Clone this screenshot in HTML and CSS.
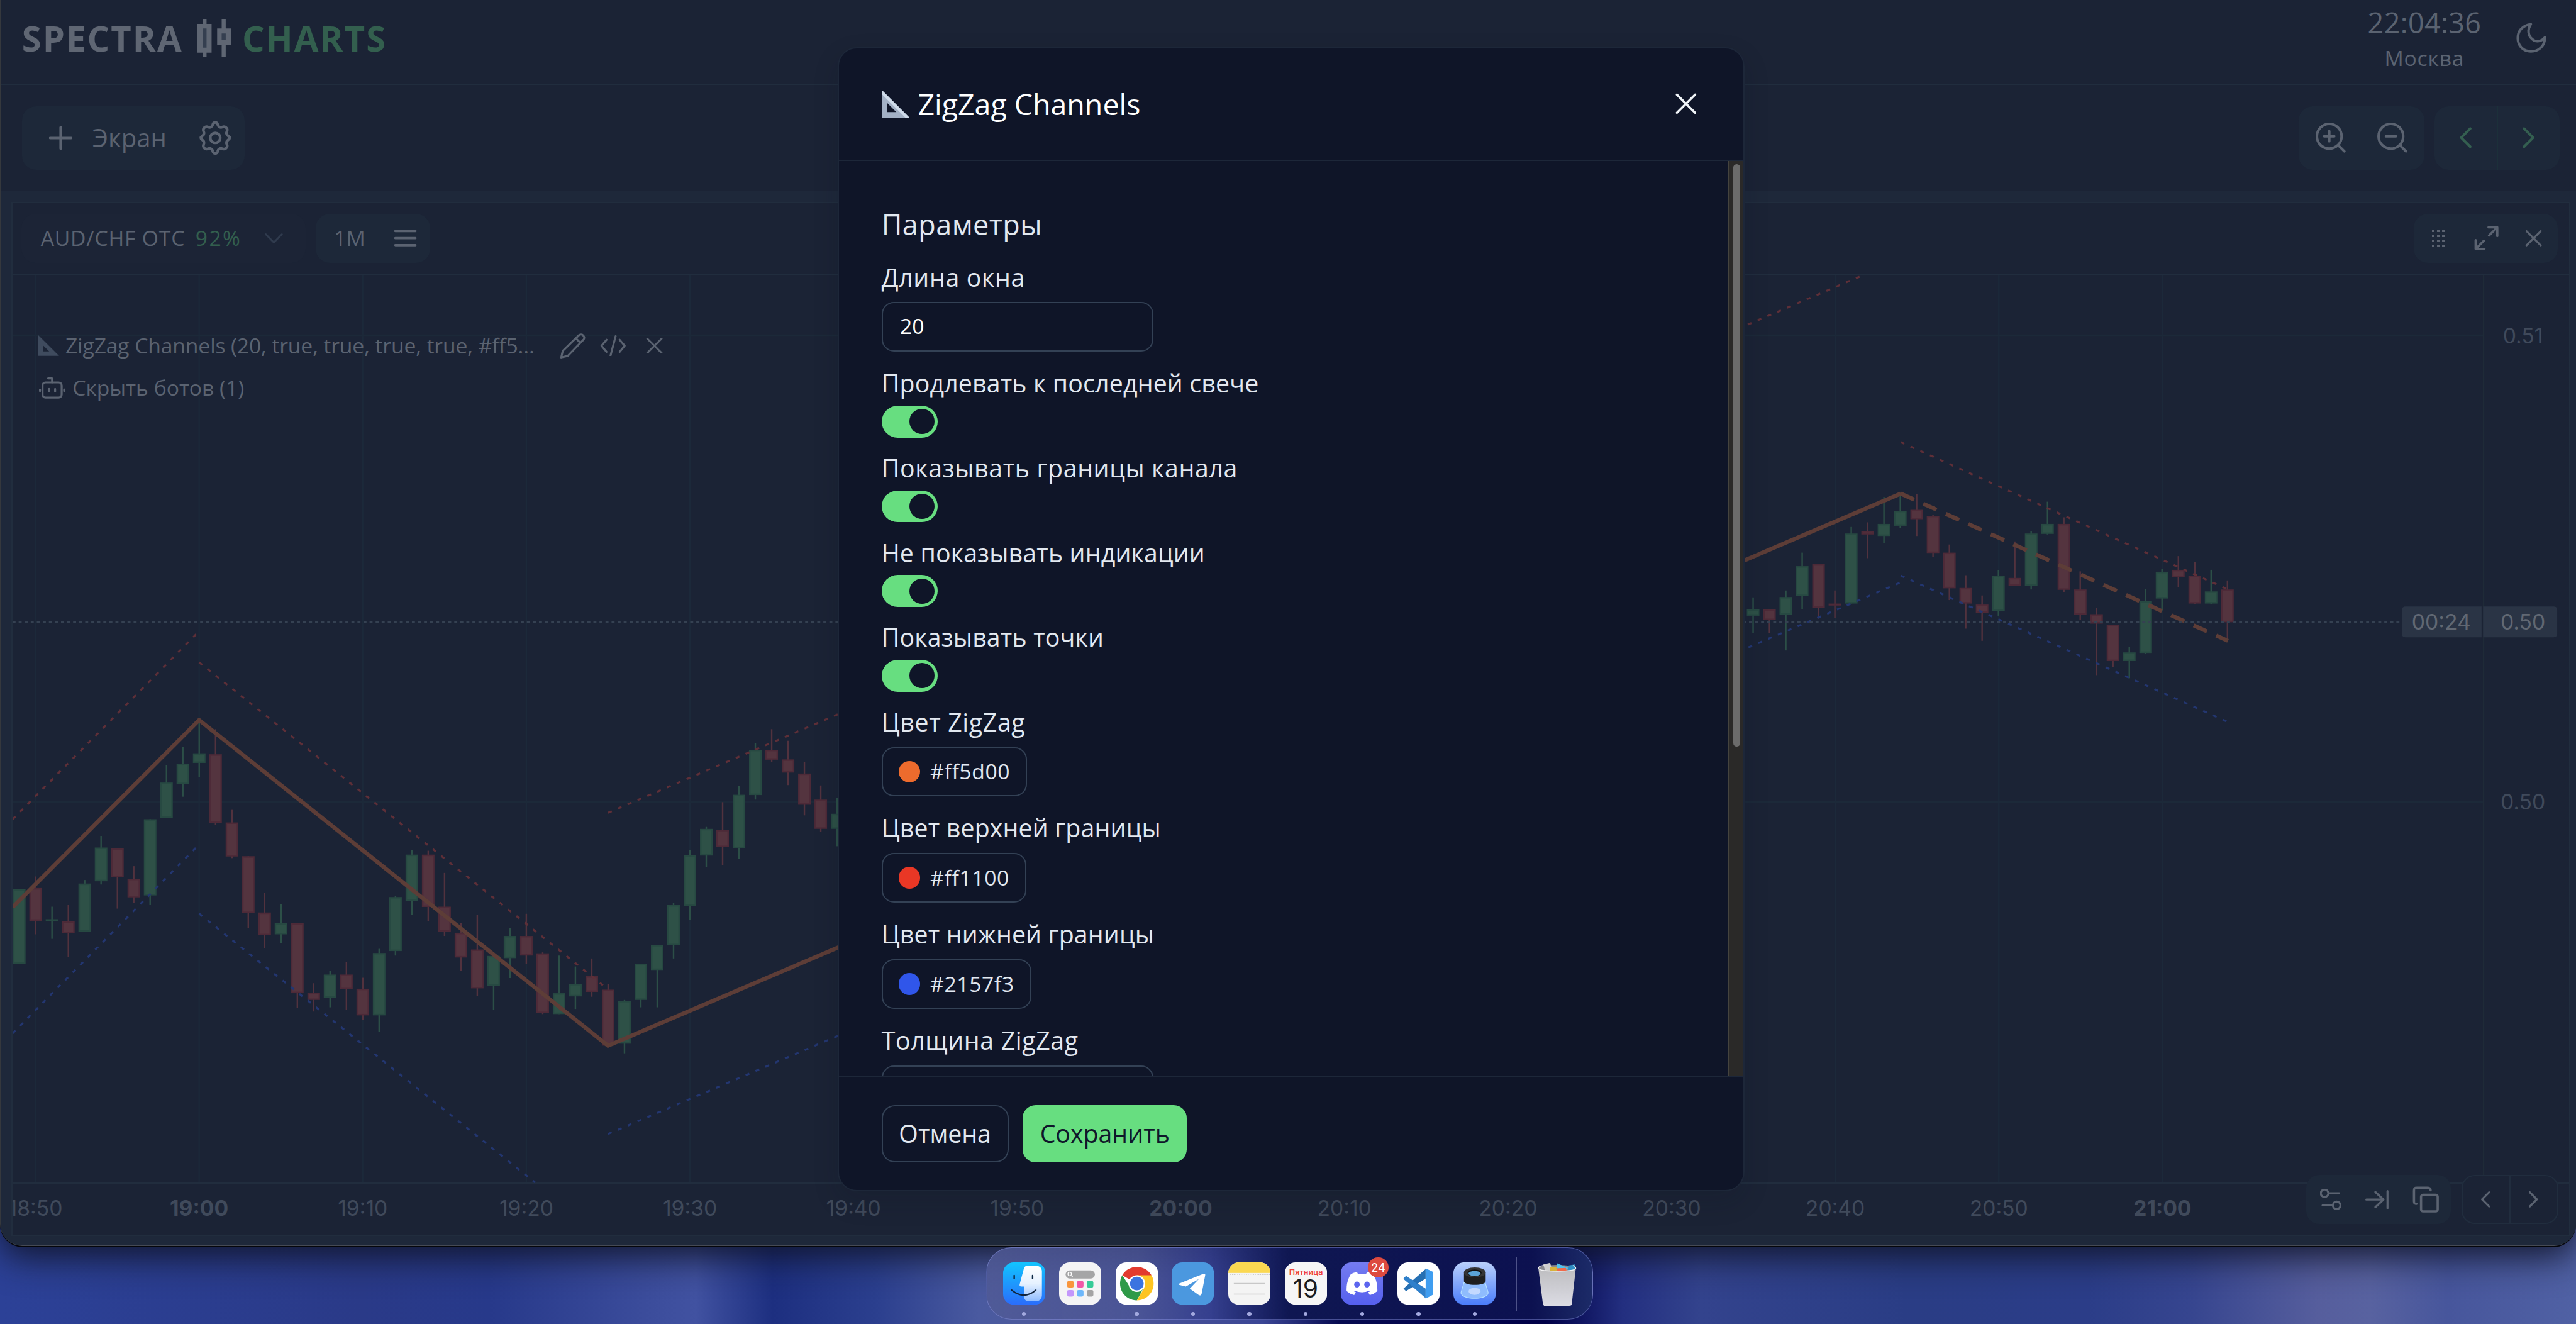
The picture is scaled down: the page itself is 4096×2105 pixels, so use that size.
FILE: index.html
```html
<!DOCTYPE html>
<html lang="ru">
<head>
<meta charset="utf-8">
<title>Spectra Charts</title>
<link rel="stylesheet" href="styles.css">
</head>
<body>
<div class="desktop">
  <div class="window">
    <header class="topbar">
      <div class="logo">
        <span class="logo-main">SPECTRA</span>
        <svg class="logo-icon" viewBox="0 0 68 76"><path d="M10 0h8v10h10v57H18v9h-8v-9H0V10h10zM48 0h8v19h11v33H56v24h-8V52H39V19h9z" fill="#5f6673"/><path d="M10 19h8v38h-8zM48 29h8v13h-8z" fill="#353f50"/></svg>
        <span class="logo-accent">CHARTS</span>
      </div>
      <div class="topbar-right">
        <div class="clock"><span class="clock-time">22:04:36</span><span class="clock-city">Москва</span></div>
        <svg class="icon moon" viewBox="0 0 60 60"><path d="M29 3C13 5 3 16 3 31c0 15 11 26 26 26 16 0 28-11 28-28-7 9-18 10-25 4-9-7-10-20-3-30z" stroke-width="5"/></svg>
      </div>
    </header>

    <div class="toolbar">
      <div class="group screen-group">
        <svg class="icon plus" viewBox="0 0 46 46"><path d="M23 2v42M2 23h42" stroke-width="5"/></svg>
        <span class="screen-label">Экран</span>
        <svg class="icon gear" viewBox="0 0 24 24"><path stroke-width="1.9" d="M10.3 2.6c.4-1.9 3-1.9 3.4 0 .3 1.6 1.8 2.4 3.3 1.8 1.900-.8 4 1 3.200 2.900-.6 1.300-.3 2.500.8 3.300 1.500 1 1.500 1.800 0 2.800-1.100.8-1.400 2-.8 3.300.8 1.900-1.300 3.700-3.200 2.900-1.500-.6-3 .2-3.300 1.800-.4 1.900-3 1.900-3.400 0-.3-1.600-1.800-2.400-3.300-1.800-1.900.8-4-1-3.200-2.900.6-1.300.3-2.500-.8-3.300-1.500-1-1.500-1.800 0-2.800 1.100-.8 1.400-2 .8-3.300-.8-1.900 1.300-3.700 3.200-2.900 1.500.6 3-.2 3.300-1.800z"/><circle cx="12" cy="12" r="3.500" stroke-width="1.900"/></svg>
      </div>
      <div class="toolbar-right">
        <div class="group zoom-group">
          <svg class="icon zoom" viewBox="0 0 60 60"><circle cx="27" cy="27" r="24.500" stroke-width="5"/><path d="M45 45l12 12M27 17v20M17 27h20" stroke-width="5"/></svg>
          <svg class="icon zoom" viewBox="0 0 60 60"><circle cx="27" cy="27" r="24.500" stroke-width="5"/><path d="M45 45l12 12M17 27h20" stroke-width="5"/></svg>
        </div>
        <div class="group nav-group">
          <span class="nav-cell"><svg class="icon chev green" viewBox="0 0 24 42"><path d="M21 3L3 21l18 18" stroke-width="5"/></svg></span>
          <span class="nav-cell"><svg class="icon chev green" viewBox="0 0 24 42"><path d="M3 3l18 18L3 39" stroke-width="5"/></svg></span>
        </div>
      </div>
    </div>

    <main class="workspace">
      <section class="panel">
        <div class="panel-head">
          <div class="panel-left">
            <div class="group pair"><span class="pair-name">AUD/CHF OTC</span><span class="pair-pct">92%</span><svg class="icon pair-chev" viewBox="0 0 36 20"><path d="M2 2l16 16L34 2" stroke-width="3.500"/></svg></div>
            <div class="group frame"><span class="frame-name">1M</span><svg class="icon burger" viewBox="0 0 44 34"><path d="M2 3h40M2 17h40M2 31h40" stroke-width="4.500"/></svg></div>
          </div>
          <div class="group panel-tools">
            <svg class="icon grip" viewBox="0 0 25 35"><path d="M0 2.500h25M0 12.500h25M0 22.500h25M0 32.500h25" stroke-width="5" stroke-dasharray="5" stroke-linecap="butt"/></svg>
            <svg class="icon expand" viewBox="0 0 48 48"><path d="M28 3h17v17M44 4L29 19M20 45H3V28M4 44l15-15" stroke-width="4.500"/></svg>
            <svg class="icon cross-sm" viewBox="0 0 34 34"><path d="M2 2l30 30M32 2L2 32" stroke-width="4"/></svg>
          </div>
        </div>
        <div class="chart">
          <svg class="plot" id="plot" viewBox="26 546 5071 1902"></svg>
          <div class="legend">
            <div class="legend-row">
              <svg class="tri" viewBox="0 0 42 42"><path d="M0 0l42 42H0z" fill="#3f4b5e"/><path d="M9 20l13 13H9z" fill="#1b2335"/></svg>
              <span class="legend-name">ZigZag Channels (20, true, true, true, true, #ff5...</span>
              <svg class="icon pencil" viewBox="0 0 52 52"><path d="M3 49l3-13L38 5c6-5 14 3 9 9L16 46zM32 11l9 9" stroke-width="4"/></svg>
              <svg class="icon code" viewBox="0 0 52 42"><path d="M13 9L3 21l10 12M39 9l10 12-10 12M31 2L21 40" stroke-width="4"/></svg>
              <svg class="icon cross-sm" viewBox="0 0 34 34"><path d="M2 2l30 30M32 2L2 32" stroke-width="4"/></svg>
            </div>
            <div class="legend-row">
              <svg class="icon bot" viewBox="0 0 52 42"><rect x="7" y="10" width="38" height="30" rx="6" stroke-width="4"/><path d="M26 10V2h-8M2 24v3M50 24v3M20 23v5M32 23v5" stroke-width="4"/></svg>
              <span class="bots-label">Скрыть ботов (1)</span>
            </div>
          </div>
          <div class="chart-tools">
            <div class="group tools-group">
              <svg class="icon sliders" viewBox="0 0 42 42"><circle cx="9" cy="9" r="7.500" stroke-width="4"/><circle cx="33" cy="33" r="7.500" stroke-width="4"/><path d="M18 9h20M5 33h19" stroke-width="4"/></svg>
              <svg class="icon tobar" viewBox="0 0 46 38"><path d="M2 19h34M20 4l16 15-16 15M44 2v34" stroke-width="4"/></svg>
              <svg class="icon copy" viewBox="0 0 52 52"><rect x="17" y="17" width="33" height="33" rx="4" stroke-width="4.500"/><path d="M8 35c-4 0-5-1-5-5V9c0-5 1-6 6-6h20c5 0 7 1 7 5" stroke-width="4.500"/></svg>
            </div>
            <div class="pager">
              <span class="pager-cell"><svg class="icon pager-chev" viewBox="0 0 18 32"><path d="M16 2L2 16l14 14" stroke-width="4"/></svg></span>
              <span class="pager-cell"><svg class="icon pager-chev" viewBox="0 0 18 32"><path d="M2 2l14 14L2 30" stroke-width="4"/></svg></span>
            </div>
          </div>
        </div>
      </section>
    </main>

    <div class="modal">
      <div class="modal-head">
        <svg class="modal-tri" viewBox="0 0 55 55"><path d="M0 0l55 55H0z" fill="#a3b1c6"/><path d="M0 0l55 55h-8L0 8z" fill="#cfdbea"/><path d="M10 25l19 19H10z" fill="#0f1528"/></svg>
        <h1 class="modal-title">ZigZag Channels</h1>
        <svg class="modal-close" viewBox="0 0 42 42"><path d="M3 3l36 36M39 3L3 39"/></svg>
      </div>
      <div class="modal-mid">
        <div class="modal-body">
          <h2 class="section">Параметры</h2>
          <div class="field"><label class="wide">Длина окна</label><div class="input">20</div></div>
          <div class="field sw"><label>Продлевать к последней свече</label><span class="toggle"></span></div>
          <div class="field sw"><label class="wide">Показывать границы канала</label><span class="toggle"></span></div>
          <div class="field sw"><label>Не показывать индикации</label><span class="toggle"></span></div>
          <div class="field sw"><label>Показывать точки</label><span class="toggle"></span></div>
          <div class="field"><label class="wide">Цвет ZigZag</label><div class="color"><i class="dot orange"></i>#ff5d00</div></div>
          <div class="field"><label>Цвет верхней границы</label><div class="color"><i class="dot red"></i>#ff1100</div></div>
          <div class="field"><label>Цвет нижней границы</label><div class="color"><i class="dot blue"></i>#2157f3</div></div>
          <div class="field"><label class="wide">Толщина ZigZag</label><div class="input"></div></div>
        </div>
        <div class="scroll"><div class="thumb"></div></div>
      </div>
      <div class="modal-foot">
        <div class="btn">Отмена</div>
        <div class="btn primary">Сохранить</div>
      </div>
    </div>
  </div>

  <div class="dock-area">
    <div class="dock">
      <div class="app on">
        <svg viewBox="0 0 84 84"><defs><linearGradient id="fa" x2="0" y2="1"><stop stop-color="#12c4ff"/><stop offset="1" stop-color="#2a6dfb"/></linearGradient><linearGradient id="fb" x2="0" y2="1"><stop stop-color="#fff"/><stop offset=".5" stop-color="#e6f2ff"/><stop offset="1" stop-color="#8fbcff"/></linearGradient></defs><rect width="84" height="84" rx="21" fill="url(#fa)"/><path d="M48 7h18c7 0 11 5 11 11v47c0 7-4 12-11 12H51c-6 0-9-3-9-8V48h-5c-4 0-5-1-4-5l8-30c1-4 3-6 7-6z" fill="url(#fb)"/><path d="M22 26v6M58.500 26v6" stroke="#0e2a45" stroke-width="3" stroke-linecap="round"/><path d="M17 55q24 20 48 0" fill="none" stroke="#10233c" stroke-width="2.800" stroke-linecap="round"/></svg>
      </div>
      <div class="app">
        <svg viewBox="0 0 84 84"><rect width="84" height="84" rx="21" fill="#f4f4f5"/><rect x="13" y="16" width="58" height="16" rx="8" fill="#a5a5a6"/><circle cx="21" cy="23" r="3.500" fill="none" stroke="#fff" stroke-width="1.500"/><path d="M24 26l3 3" stroke="#fff" stroke-width="1.500"/><rect x="16" y="37" width="13" height="13" rx="3" fill="#f9963c"/><rect x="35.500" y="37" width="13" height="13" rx="3" fill="#f258a7"/><rect x="55" y="37" width="13" height="13" rx="3" fill="#38cb98"/><rect x="16" y="55" width="13" height="13" rx="3" fill="#c497fb"/><rect x="35.500" y="55" width="13" height="13" rx="3" fill="#6eb8fb"/><rect x="55" y="55" width="13" height="13" rx="3" fill="#a4a4a4"/></svg>
      </div>
      <div class="app on">
        <svg viewBox="0 0 84 84"><rect width="84" height="84" rx="21" fill="#fff"/><path d="M42 42L13 25.500A33.500 33.500 0 0 1 71 25.500z" fill="#e23a2e"/><path d="M42 42L29 50 13 25.500A33.500 33.500 0 0 0 42 75.500l14-26z" fill="#2f9a48"/><path d="M42 25.500h29A33.500 33.500 0 0 1 42 75.500l15-25z" fill="#fdc422"/><circle cx="42" cy="42" r="16.500" fill="#fff"/><circle cx="42" cy="42" r="13.500" fill="#3b74e0"/></svg>
      </div>
      <div class="app on">
        <svg viewBox="0 0 84 84"><rect width="84" height="84" rx="21" fill="#4b98df"/><path d="M15 42l47-19c4-1.500 5 0 4.500 3l-7 36c-1 4-4 4.500-7 2L36 52l18-19-26 15-12-3c-3-1-3-2-1-3z" fill="#fff"/></svg>
      </div>
      <div class="app on">
        <svg viewBox="0 0 84 84"><defs><clipPath id="nc"><rect width="84" height="84" rx="21"/></clipPath></defs><g clip-path="url(#nc)"><rect width="84" height="84" fill="#f4f4f4"/><rect width="84" height="21" fill="#fbd851"/><path d="M4 24h80" stroke="#b9b9b9" stroke-width="1.500" stroke-dasharray="1.500 2"/><path d="M11 42h62M11 63h62" stroke="#c8c8c8" stroke-width="2"/></g></svg>
      </div>
      <div class="app on">
        <svg viewBox="0 0 84 84"><rect width="84" height="84" rx="21" fill="#f6f6f6"/><text x="42" y="25" class="cal-day" textLength="67" lengthAdjust="spacingAndGlyphs">Пятница</text><text x="41" y="70" class="cal-num" textLength="50" lengthAdjust="spacingAndGlyphs">19</text></svg>
      </div>
      <div class="app on">
        <svg viewBox="0 0 84 84"><defs><linearGradient id="dc" x2="0" y2="1"><stop stop-color="#757cf0"/><stop offset="1" stop-color="#5660ee"/></linearGradient></defs><rect width="84" height="84" rx="21" fill="url(#dc)"/><path d="M20 23q6-3 12-4l2 4q8-1 16 0l2-4q7 1 12 4 9 14 8.500 34-7 6-15 8l-4-7q-11 4-23 0l-4 7q-8-2-15-8-1-19 8.500-34z" fill="#fff"/><path d="M27 57q15 7 30 0" fill="none" stroke="#5c65ee" stroke-width="2"/><ellipse cx="32" cy="44" rx="5.500" ry="6" fill="#5c65ee"/><ellipse cx="52" cy="44" rx="5.500" ry="6" fill="#5c65ee"/></svg>
        <span class="badge">24</span>
      </div>
      <div class="app on">
        <svg viewBox="0 0 84 84"><rect width="84" height="84" rx="21" fill="#fff"/><path d="M17 27l-5 5 44 39V52z" fill="#2f7fca"/><path d="M17 57l-5-5 44-39v19z" fill="#256fb3"/><path d="M17 27l-5 6 43 36V54z" fill="#2f80cb"/><path d="M56 12l15 7v45l-15 8z" fill="#3f9df0"/></svg>
      </div>
      <div class="app on">
        <svg viewBox="0 0 84 84"><defs><linearGradient id="pv" x2="0" y2="1"><stop stop-color="#b9d0fb"/><stop offset="1" stop-color="#4a7dfa"/></linearGradient></defs><rect width="84" height="84" rx="21" fill="url(#pv)"/><path d="M21 40L15 60c0 15 54 15 54 0l-6-20z" fill="#8fbcfd" stroke="#b5e0ff" stroke-width="1.500"/><ellipse cx="42" cy="57.500" rx="12" ry="7" fill="#c3d9ff"/><path d="M21 20v17c0 10 43 10 43 0V20z" fill="#1f1f20"/><ellipse cx="42.500" cy="20" rx="21.500" ry="10" fill="#343435"/><ellipse cx="42" cy="21" rx="14" ry="7" fill="#111"/><ellipse cx="42" cy="22" rx="12" ry="5" fill="#5aa4d8"/></svg>
      </div>
      <div class="dock-sep"></div>
      <div class="app trash">
        <svg viewBox="0 0 84 90"><defs><linearGradient id="tr" x2="0" y2="1"><stop stop-color="#bdbdc0"/><stop offset="1" stop-color="#dcdce4"/></linearGradient></defs><ellipse cx="42" cy="12" rx="38" ry="7" fill="#8a8a8e"/><path d="M14 4l14-3 4 16-14 1z" fill="#cfcfcf"/><path d="M28 10l14-1v9H28z" fill="#d6b23c"/><path d="M42 2l22 9-4 8-18 1z" fill="#4fc3f0"/><path d="M40 12l20-1 2 8-18 1z" fill="#f06a4a"/><path d="M66 6l12-2v11l-14 3z" fill="#2f8fc4"/><path d="M4 12c2 8 74 8 76 0l-8 71c0 4-2 5-5 5H18c-4 0-5-2-5-5z" fill="url(#tr)"/><path d="M4 12c0-4 8-6 12-6M4 12c2 8 74 8 76 0 0-3-3-5-6-6" fill="none" stroke="#f2f2f4" stroke-width="1.600"/></svg>
      </div>
    </div>
  </div>
</div>
<script src="chart.js"></script>
</body>
</html>
```
FILE: styles.css
```css
/* 1rem = 100 design pixels on a 5110px wide canvas */
html { font-size: calc(100vw / 51.1); }
* { box-sizing: border-box; }
body {
  margin: 0;
  font-family: "Open Sans", "Noto Sans", sans-serif;
  font-size: .42rem;
  line-height: 1;
  color: #5b6371;
}
svg { display: block; flex: none; }
h1, h2 { margin: 0; font-weight: 400; }
span, label { white-space: pre; }

.desktop {
  height: 100vh;
  overflow: hidden;
  display: flex;
  flex-direction: column;
  background: linear-gradient(90deg, #2c4197 0, #2a3a88 14%, #27398a 19%, #3b4c9b 25%, #4152a1 27%, #1d2f80 30%, #2b3f8e 34%, #4a5aa0 38%, #505a98 42%, #3b4695 49%, #060a50 52%, #000047 60%, #232f80 63%, #33438d 66%, #2a3d85 74%, #2b3d88 81%, #36458f 85%, #565e9d 90%, #5862a0 92%, #47569c 95%, #5061a4 100%);
}

/* app window */
.window {
  position: relative;
  height: 24.71rem;
  flex: none;
  display: flex;
  flex-direction: column;
  background: #1b2335;
  border-left: .02rem solid #35383d;
  border-bottom: .02rem solid #454a54;
  border-radius: 0 0 .44rem .44rem;
  box-shadow: 0 .02rem 0 #05060a, 0 .2rem .7rem rgba(16, 20, 40, .95);
}
.icon { fill: none; stroke: #5b6371; stroke-linecap: round; stroke-linejoin: round; }
.icon.green { stroke: #345f50; }
.group { display: flex; align-items: center; background: #1d2839; border-radius: .28rem; }

.topbar {
  height: 1.69rem;
  flex: none;
  display: flex;
  justify-content: space-between;
  border-bottom: .03rem solid #212d3e;
  padding: 0 .58rem 0 .42rem;
}
.logo { display: flex; align-items: center; height: 1.5rem; font-size: .7rem; font-weight: 700; }
.logo-main { width: 3.48rem; letter-spacing: .026rem; color: #5f6673; }
.logo-icon { width: .68rem; height: .76rem; }
.logo-accent { margin-left: .21rem; letter-spacing: .026rem; color: #335f4e; }
.topbar-right { display: flex; align-items: center; height: 1.54rem; gap: .7rem; }
.clock { display: flex; flex-direction: column; align-items: center; gap: .21rem; }
.clock-time { font-size: .56rem; letter-spacing: .005rem; }
.clock-city { font-size: .42rem; letter-spacing: .01rem; }
.moon { width: .6rem; height: .6rem; margin-bottom: .03rem; }

.toolbar {
  height: 2.09rem;
  flex: none;
  display: flex;
  justify-content: space-between;
  align-items: center;
  padding: 0 .32rem 0 .42rem;
}
.screen-group { height: 1.26rem; width: 4.42rem; padding-left: .54rem; }
.plus { width: .46rem; height: .46rem; }
.screen-label { font-size: .5rem; margin-left: .4rem; width: 2.1rem; }
.gear { width: .68rem; height: .68rem; }
.toolbar-right { display: flex; gap: .2rem; }
.zoom-group { width: 2.49rem; height: 1.26rem; justify-content: center; gap: .62rem; }
.zoom { width: .6rem; height: .6rem; }
.nav-group { width: 2.49rem; height: 1.26rem; }
.nav-cell { flex: 1; height: 100%; display: flex; align-items: center; justify-content: center; }
.nav-cell + .nav-cell { border-left: .03rem solid #1c303a; }
.chev { width: .24rem; height: .42rem; }

.workspace {
  flex: 1;
  min-height: 0;
  display: flex;
  padding: .22rem .11rem .18rem .21rem;
  background: #1e283a;
  border-radius: 0 0 .42rem .42rem;
}
.panel { flex: 1; display: flex; flex-direction: column; background: #1b2335; border: .03rem solid #212d3e; }
.panel-head {
  height: 1.43rem;
  flex: none;
  display: flex;
  align-items: center;
  justify-content: space-between;
  padding: 0 .23rem 0 .18rem;
  border-bottom: .03rem solid #212d3e;
}
.panel-left { display: flex; gap: .21rem; }
.pair { width: 5.63rem; height: .98rem; padding-left: .38rem; background: #1c2436; }
.pair-name { width: 3.07rem; letter-spacing: .01rem; }
.pair-pct { width: 1.38rem; letter-spacing: .03rem; color: #335f4e; }
.pair-chev { width: .36rem; height: .2rem; stroke: #303b4e; }
.frame { width: 2.26rem; height: .98rem; padding-left: .36rem; }
.frame-name { width: 1.2rem; }
.burger { width: .44rem; height: .34rem; }
.panel-tools { width: 2.86rem; height: .98rem; padding-left: .37rem; }
.grip { width: .25rem; height: .35rem; margin-right: .58rem; }
.expand { width: .49rem; height: .49rem; margin-right: .52rem; }
.cross-sm { width: .34rem; height: .32rem; }

.chart { flex: 1; position: relative; }
.plot { width: 100%; height: 100%; }
.plot text { font: .42rem Inter, sans-serif; font-size: 42px; fill: #404a5b; text-anchor: middle; }
.plot .major { font-weight: 700; }
.plot .price { fill: #616873; }
.plot .wick { stroke-width: 3; }
.plot .up { fill: #2e5147; stroke: #274942; }
.plot .down { fill: #54343f; stroke: #4d2a38; }
.plot .up.wick { stroke: #2c4f47; }
.plot .down.wick { stroke: #52323e; }
.legend { position: absolute; left: .51rem; top: 1.13rem; }
.legend-row { display: flex; align-items: center; height: .54rem; margin-bottom: .3rem; }
.tri { width: .41rem; height: .41rem; }
.legend-name { width: 9.8rem; margin-left: .13rem; letter-spacing: -.0015rem; }
.pencil { width: .52rem; height: .52rem; margin-right: .29rem; }
.code { width: .52rem; height: .42rem; margin-right: .38rem; }
.bot { width: .52rem; height: .42rem; margin-left: .01rem; }
.bots-label { margin-left: .15rem; }
.chart-tools { position: absolute; right: .22rem; bottom: .21rem; display: flex; gap: .21rem; }
.tools-group { width: 2.87rem; height: .98rem; padding: 0 .24rem 0 .28rem; justify-content: space-between; border-radius: .26rem; }
.sliders { width: .42rem; height: .42rem; }
.tobar { width: .46rem; height: .38rem; }
.copy { width: .52rem; height: .52rem; }
.pager { width: 1.92rem; height: .98rem; display: flex; background: #1b2335; border: .03rem solid #212d3e; border-radius: .26rem; }
.pager-cell { flex: 1; display: flex; align-items: center; justify-content: center; }
.pager-cell + .pager-cell { border-left: .03rem solid #212d3e; }
.pager-chev { width: .18rem; height: .32rem; }

/* settings dialog, over the chart */
.modal {
  position: absolute;
  left: 16.6rem;
  top: .93rem;
  width: 18rem;
  height: 22.7rem;
  display: flex;
  flex-direction: column;
  background: #0f1528;
  border: .03rem solid #1d2739;
  border-radius: .38rem;
  box-shadow: 0 .2rem .5rem rgba(10, 20, 30, .16);
  color: #e2e8f0;
}
.modal-head {
  height: 2.24rem;
  flex: none;
  display: flex;
  align-items: center;
  padding: 0 .93rem 0 .85rem;
  border-bottom: .03rem solid #1d2739;
}
.modal-tri { width: .55rem; height: .55rem; }
.modal-title { flex: 1; margin-left: .17rem; font-size: .58rem; font-weight: 500; color: #fff; }
.modal-close { width: .42rem; height: .42rem; fill: none; stroke: #f1f5f9; stroke-width: 4.5; stroke-linecap: round; }
.modal-mid { flex: 1; min-height: 0; display: flex; }
.modal-body { flex: 1; overflow: hidden; padding: .96rem 0 0 .85rem; }
.section { font-size: .56rem; line-height: .6rem; margin-bottom: .43rem; letter-spacing: .006rem; }
.field { display: flex; flex-direction: column; align-items: flex-start; gap: .18rem; margin-bottom: .315rem; }
.field.sw { gap: .13rem; margin-bottom: .29rem; }
.field label { font-size: .49rem; line-height: .63rem; letter-spacing: .002rem; }
.field label.wide { letter-spacing: .008rem; }
.input { width: 5.39rem; height: .98rem; flex: none; display: flex; align-items: center; padding-left: .34rem; padding-bottom: .02rem; border: .03rem solid #334155; border-radius: .24rem; color: #fff; }
.toggle { width: 1.12rem; height: .63rem; border-radius: .32rem; background: #67de80; display: flex; align-items: center; justify-content: flex-end; padding-right: .065rem; }
.toggle::after { content: ""; width: .5rem; height: .5rem; border-radius: 50%; background: #0f1528; }
.color { height: .98rem; flex: none; display: flex; align-items: center; padding: 0 .31rem; border: .03rem solid #334155; border-radius: .24rem; letter-spacing: .008rem; }
.dot { width: .43rem; height: .43rem; border-radius: 50%; margin-right: .2rem; }
.dot.orange { background: #ed6b2d; }
.dot.red { background: #e93725; }
.dot.blue { background: #3056ea; }
.scroll { width: .3rem; padding: .06rem .06rem 0 .08rem; background: #2a2928; border-left: .02rem solid #45443f; border-right: .02rem solid #55534f; }
.thumb { height: 11.56rem; border-radius: .08rem; background: #6b6b6b; }
.modal-foot { height: 2.27rem; flex: none; display: flex; gap: .28rem; padding: .56rem 0 0 .85rem; border-top: .03rem solid #1d2739; }
.btn { height: 1.13rem; display: flex; align-items: center; padding: 0 .32rem; border: .03rem solid #334155; border-radius: .26rem; font-size: .49rem; }
.btn.primary { background: #67de80; border-color: #67de80; color: #0f172a; }

/* system dock */
.dock-area { flex: 1; display: flex; justify-content: center; padding: .03rem 0 0 .06rem; position: relative; }
.dock {
  width: 12.04rem;
  height: 1.44rem;
  display: flex;
  padding: .29rem 0 0 .32rem;
  border: .015rem solid rgba(150, 160, 240, .42);
  border-radius: .5rem;
  background: linear-gradient(90deg, rgba(80, 90, 150, .85) 0, rgba(75, 85, 150, .8) 25%, rgba(50, 60, 140, .8) 37%, #0f1752 50%, #0c1150 90%, #1c2b68 100%);
}
.app { position: relative; width: .84rem; height: 1.1rem; margin-right: .278rem; }
.app svg { width: .84rem; height: .84rem; }
.app.on::after { content: ""; position: absolute; left: .38rem; bottom: .04rem; width: .08rem; height: .08rem; border-radius: 50%; background: #a3a9df; }
.cal-day { font: 600 15px Inter, sans-serif; fill: #f0453f; text-anchor: middle; }
.cal-num { font: 400 50px Inter, sans-serif; fill: #1c1c1e; text-anchor: middle; }
.badge { position: absolute; right: -.1rem; top: -.1rem; width: .4rem; height: .4rem; border-radius: 50%; background: #dd4a3f; color: #fff; font: .23rem/.4rem Inter, sans-serif; text-align: center; }
.dock-sep { width: .015rem; height: 1.08rem; margin: -.12rem .39rem 0 .12rem; background: #4d5288; }
.app.trash { width: .78rem; }
.app.trash svg { width: .82rem; height: .88rem; }
```
FILE: chart.js
```js
// Candles: index, direction, body top, body bottom, wick top, wick bottom.
var left = [
  "0g883,1116,883,1116", "1r880,982,844,1024", "2g977,982,938,1038", "3r983,1021,933,1094",
  "4g866,1016,855,1016", "5g754,859,718,869", "6r756,847,756,944", "7r851,909,812,927",
  "8g666,903,666,933", "9g552,662,497,662", "10g494,557,442,596", "11g461,491,358,535",
  "12r464,677,386,684", "13r676,782,637,787", "14r781,958,781,1005", "15r956,1027,895,1066",
  "16g989,1024,931,1051", "17r989,1207,989,1253", "18r1206,1228,1176,1264", "19g1149,1221,1137,1251",
  "20r1149,1195,1109,1258", "21r1193,1276,1159,1290", "22g1082,1276,1069,1327", "23g908,1076,905,1090",
  "24g776,920,762,963", "25r776,939,764,982", "26r938,1016,833,1029", "27r1019,1096,988,1137",
  "28r1071,1192,963,1215", "29g1091,1184,1080,1258", "30g1029,1098,1005,1160", "31r1029,1090,960,1115",
  "32r1083,1269,1080,1272", "33g1207,1272,1090,1272", "34g1178,1217,1124,1256", "35r1154,1203,1099,1218",
  "36r1196,1370,1178,1370", "37g1231,1364,1228,1394", "38g1116,1228,1116,1251", "39g1057,1135,1057,1251",
  "40g933,1058,927,1099", "41g778,935,762,980", "42g696,779,690,815", "43r699,753,613,809",
  "44g590,756,563,789", "45g450,591,430,605", "46r450,481,386,488", "47r480,521,422,560",
  "48r524,621,489,654", "49r605,696,561,706", "50g649,696,599,750"
];
var right = [
  "106g936,970,875,1061", "107r936,993,936,1061", "108g873,964,839,1150", "109g713,868,643,936",
  "110r703,928,703,985", "111r907,917,839,983", "112g544,907,510,907", "113r531,549,486,672",
  "114g494,557,355,593", "115g426,504,334,517", "116r421,470,340,557", "117r452,645,447,664",
  "118r643,828,601,889", "119r826,907,760,1037", "120r912,954,865,1100", "121g763,946,734,970",
  "122r774,815,585,815", "123g544,815,531,834", "124g494,546,379,549", "125r494,836,460,849",
  "126r834,964,740,990", "127r962,1011,928,1278", "128r1017,1205,1017,1236", "129g1160,1205,1132,1294",
  "130g894,1163,831,1168", "131g742,881,729,943", "132r732,771,661,823", "133r763,907,690,909",
  "134g844,907,732,909", "135r834,1004,787,1100"
];
var out = "";

for (var i = 0; i < 14; i++) {
  out += line(71.5 + 324.5 * i, 546, 71.5 + 324.5 * i, 2345, "#1c293a", 3);
}
out += line(26, 665, 4926, 665, "#1c2939", 3) + line(26, 1590.5, 4926, 1590.5, "#1c2939", 3);
out += line(4927, 546, 4927, 2345, "#1f2b38", 3) + line(26, 2346.5, 5097, 2346.5, "#212d3e", 3);

function line(x1, y1, x2, y2, color, width, dash) {
  return '<path d="M' + x1 + " " + y1 + "L" + x2 + " " + y2 + '" fill="none" stroke="' + color +
    '" stroke-width="' + width + '"' + (dash ? ' stroke-dasharray="' + dash + '"' : "") + "/>";
}
function candles(list, scale, offset) {
  list.forEach(function (row) {
    var m = row.match(/^(\d+)([gr])(.*)$/);
    var v = m[3].split(",").map(function (n) { return n * scale + offset; });
    var x = 39.3 + 32.442 * m[1];
    var cls = m[2] === "g" ? "up" : "down";
    out += '<path class="' + cls + ' wick" d="M' + x + " " + v[2] + "V" + v[3] + '"/>';
    out += '<rect class="' + cls + '" stroke-width="3" x="' + (x - 11) + '" y="' + (v[0] + 1.5) +
      '" width="22" height="' + Math.max(1, v[1] - v[0] - 3) + '"/>';
  });
}
candles(left, 0.6378, 1200);
candles(right, 0.3827, 850);

[[26, 1625, 396, 1252], [396, 1313.5, 1207, 1962], [1207, 1612, 3703, 543], [3771, 877, 4420, 1169]].forEach(function (p) {
  out += line(p[0], p[1], p[2], p[3], "#5e2f38", 4, "8 13.2");
});
[[26, 2049.5, 396, 1675], [396, 1812, 1062, 2345], [1207, 2249, 3771, 1155], [3771, 1141.6, 4420, 1432]].forEach(function (p) {
  out += line(p[0], p[1], p[2], p[3], "#233670", 4, "8 13.2");
});
out += '<path d="M26 1799.5L396 1428L1207 2074L3771 979" fill="none" stroke="#5d3d37" stroke-width="8"/>';
out += line(3771, 979, 4420, 1271, "#5d3d37", 8, "29 20");
out += line(26, 1233.5, 4765, 1233.5, "#354152", 3, "6 6");

var times = ["18:50", "19:00", "19:10", "19:20", "19:30", "19:40", "19:50", "20:00", "20:10", "20:20", "20:30", "20:40", "20:50", "21:00"];
times.forEach(function (t, k) {
  var major = t.slice(3) === "00" ? ' class="major"' : "";
  out += "<text" + major + ' x="' + (71.5 + 324.5 * k) + '" y="2411">' + t + "</text>";
});
out += '<path d="M4772 1203h151v61h-151q-7 0-7-7v-47q0-7 7-7zM4926 1203h140q7 0 7 7v47q0 7-7 7h-140z" fill="#2a3445"/>';
out += '<text x="5005" y="681.500">0.51</text><text x="5005" y="1605.500">0.50</text>';
out += '<text class="price" x="4843" y="1248.500">00:24</text><text class="price" x="5005" y="1248.500">0.50</text>';

document.getElementById("plot").innerHTML = out;
```
